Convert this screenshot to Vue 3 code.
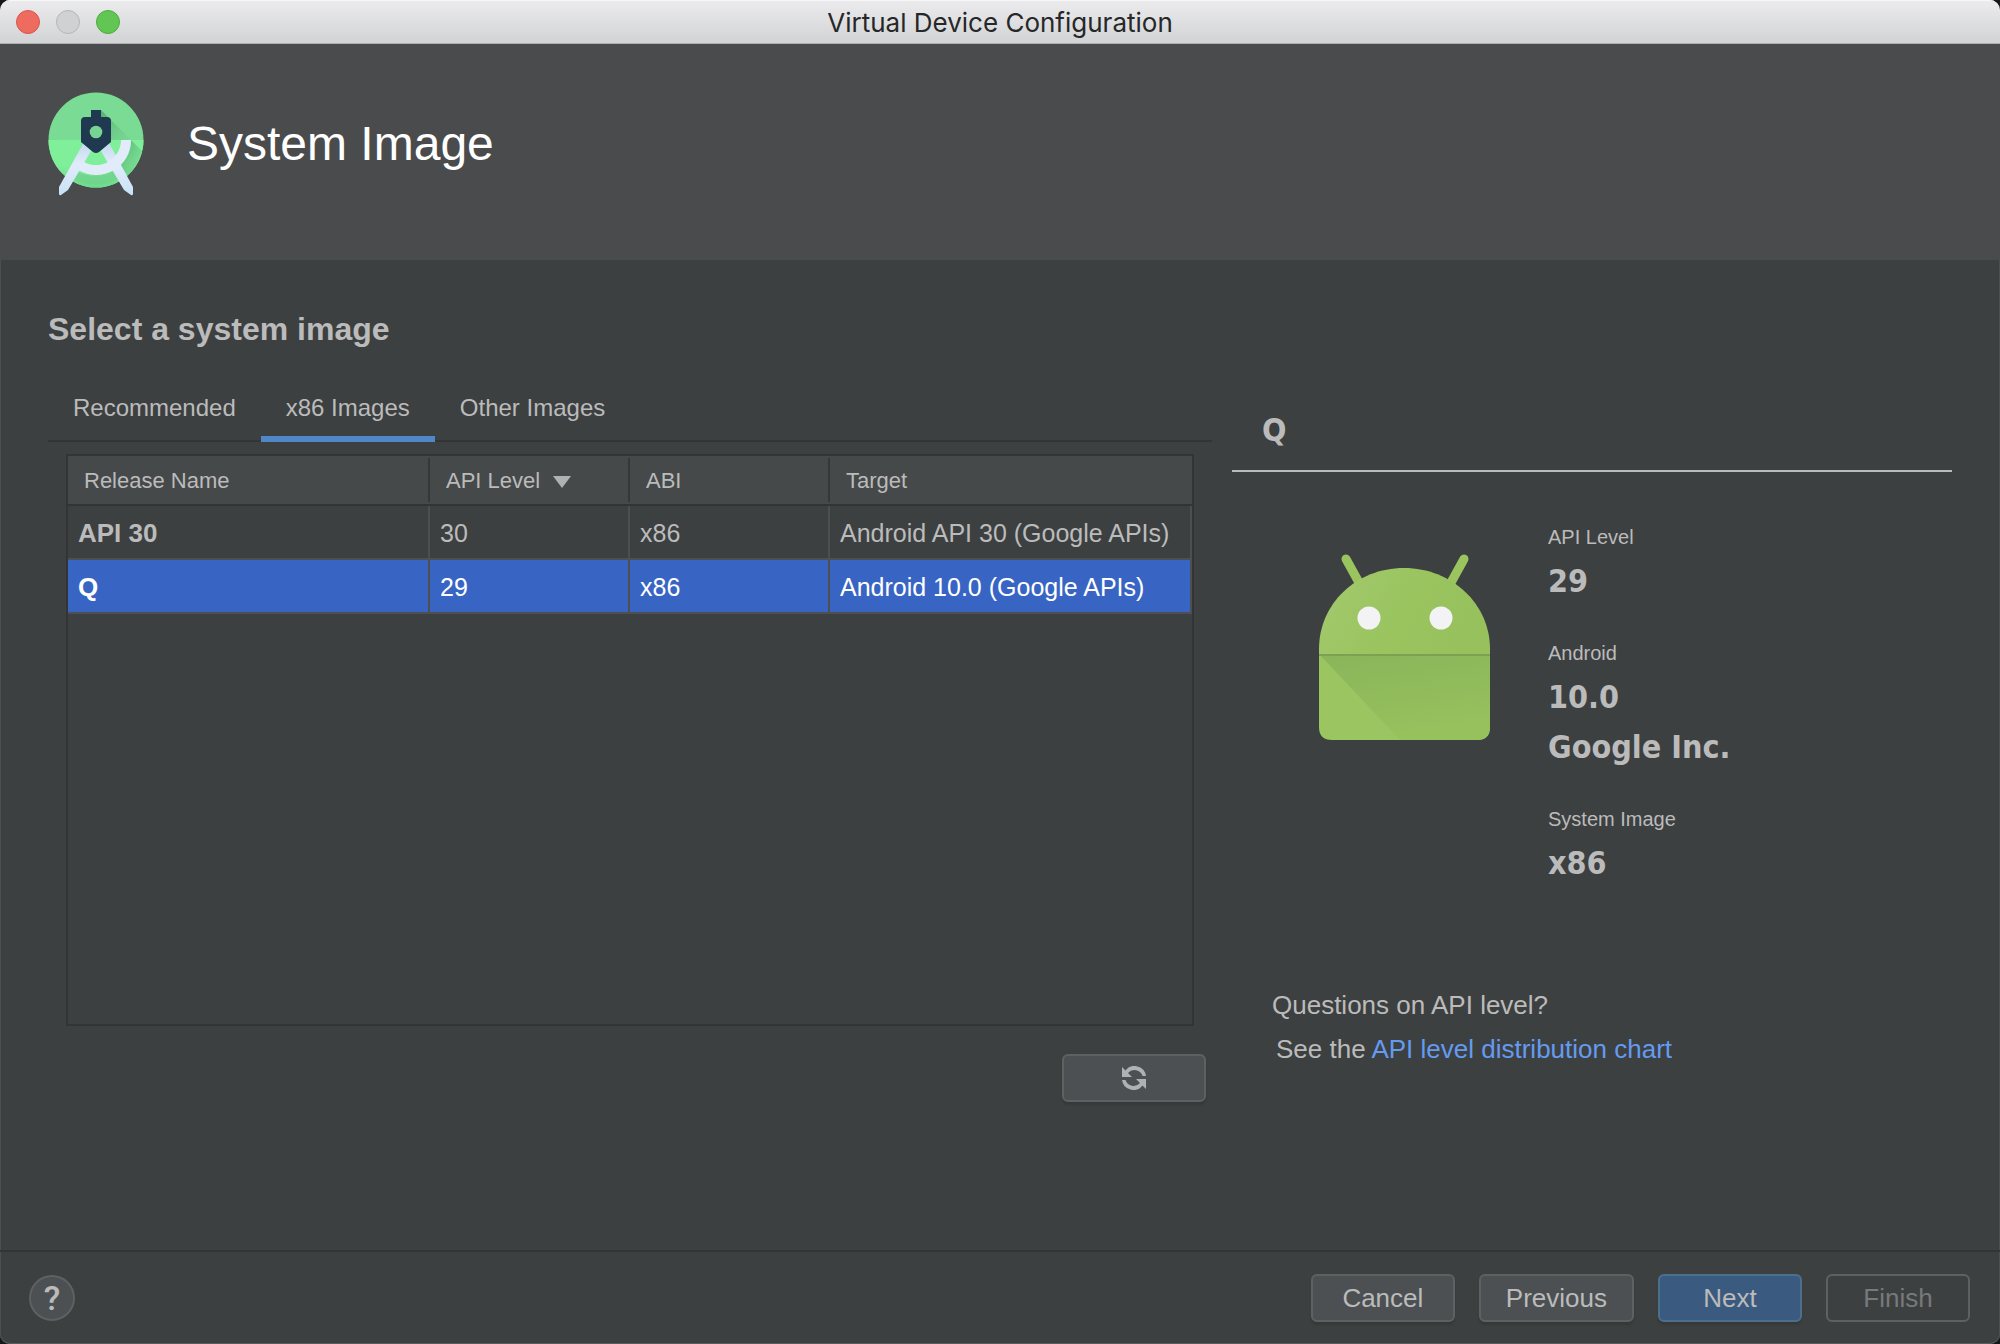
<script setup>
import { ref } from 'vue'

const tabs = ['Recommended', 'x86 Images', 'Other Images']
const activeTab = ref('x86 Images')

const images = [
  { name: 'API 30', api: '30', abi: 'x86', target: 'Android API 30 (Google APIs)' },
  { name: 'Q', api: '29', abi: 'x86', target: 'Android 10.0 (Google APIs)' },
]
const selected = ref('Q')

const details = [
  { label: 'API Level', values: ['29'] },
  { label: 'Android', values: ['10.0', 'Google Inc.'] },
  { label: 'System Image', values: ['x86'] },
]
</script>

<template>
  <div class="desktop">
    <div class="window">
      <header class="titlebar">
        <div class="lights">
          <button class="light close" type="button" aria-label="Close"></button>
          <button class="light minimize" type="button" aria-label="Minimize" disabled></button>
          <button class="light zoom" type="button" aria-label="Zoom"></button>
        </div>
        <span class="window-title">Virtual Device Configuration</span>
      </header>

      <div class="banner">
        <svg class="logo" viewBox="0 0 96 106" aria-hidden="true">
          <defs>
            <linearGradient id="leg" x1="0" y1="0" x2="0" y2="1">
              <stop offset="0" stop-color="#c6d9f0" />
              <stop offset="0.4" stop-color="#e0ecfb" />
              <stop offset="1" stop-color="#c9e2f5" />
            </linearGradient>
            <linearGradient id="disc" x1="0" y1="0" x2="0" y2="1">
              <stop offset="0" stop-color="#80ef9a" />
              <stop offset="0.5" stop-color="#80ef9a" />
              <stop offset="1" stop-color="#6fd98c" />
            </linearGradient>
            <linearGradient id="cast" x1="0" y1="0" x2="1" y2="1">
              <stop offset="0" stop-color="#55a570" stop-opacity="0.9" />
              <stop offset="1" stop-color="#6fce8b" stop-opacity="0.2" />
            </linearGradient>
            <clipPath id="disc-clip"><circle cx="48" cy="48" r="47.5" /></clipPath>
          </defs>
          <g clip-path="url(#disc-clip)">
            <rect width="96" height="96" fill="#79db94" />
            <rect y="48" width="96" height="48" fill="url(#disc)" />
            <path d="M53 18 L83 48 H63 V27 L53 25 Z" fill="url(#cast)" />
            <path d="M83 48 L94 59 Q90 74 80 84 L72 74 Q83 64 83 48Z" fill="url(#cast)" />
            <path d="M29 80 Q48 88 66 79 L70 87 Q48 98 25 87Z" fill="#6fd08b" opacity="0.7" />
          </g>
          <path d="M35.500 51 L43 59 L20 98 L13 103 Q11 104 11 101.500 V95 Z" fill="url(#leg)" />
          <path d="M61 51 L53 59 L76 98 L83 103 Q85 104 85 101.500 V95 Z" fill="url(#leg)" />
          <path d="M78 48 A30 30 0 0 1 33 74" fill="none" stroke="#e2ebfa" stroke-width="10" />
          <path d="M43 18 H53 V25 H59 Q63 25 63 29 V50 L51 60 Q48 62 45 60 L33 50 V29 Q33 25 37 25 H43 Z" fill="#1f3a50" />
          <circle cx="48" cy="40" r="6.300" fill="#78d492" />
        </svg>
        <h1>System Image</h1>
      </div>

      <main class="content">
        <section class="chooser">
          <h2>Select a system image</h2>
          <div class="tabs" role="tablist">
            <button
              v-for="tab in tabs"
              :key="tab"
              class="tab"
              :class="{ active: tab === activeTab }"
              type="button"
              role="tab"
              :aria-selected="tab === activeTab"
              @click="activeTab = tab"
            >{{ tab }}</button>
          </div>

          <div class="table-box">
            <table>
              <colgroup>
                <col class="col-name" />
                <col class="col-short" />
                <col class="col-short" />
                <col />
              </colgroup>
              <thead>
                <tr>
                  <th scope="col">Release Name</th>
                  <th scope="col" aria-sort="descending">API Level<span class="sort-arrow"></span></th>
                  <th scope="col">ABI</th>
                  <th scope="col">Target</th>
                </tr>
              </thead>
              <tbody>
                <tr
                  v-for="image in images"
                  :key="image.name"
                  :class="{ selected: image.name === selected }"
                  @click="selected = image.name"
                >
                  <td class="name">{{ image.name }}</td>
                  <td>{{ image.api }}</td>
                  <td>{{ image.abi }}</td>
                  <td>{{ image.target }}</td>
                </tr>
              </tbody>
            </table>
          </div>

          <button class="btn refresh" type="button" aria-label="Refresh">
            <svg viewBox="0 0 24 24" aria-hidden="true">
              <path d="M0 1 L3.500 4.500 A11.500 11.500 0 0 1 24 10 H20.500 A8.500 8.500 0 0 0 6 7 L10 11 H0 Z" />
              <path d="M24 23 L20.500 19.500 A11.500 11.500 0 0 1 0 14 H3.500 A8.500 8.500 0 0 0 18 17 L14 13 H24 Z" />
            </svg>
          </button>
        </section>

        <aside class="summary">
          <h3>Q</h3>
          <div class="summary-body">
            <svg class="robot" viewBox="0 0 184 190" aria-hidden="true">
              <defs>
                <linearGradient id="head" x1="0" y1="0" x2="1" y2="0.3">
                  <stop offset="0" stop-color="#a4c96f" />
                  <stop offset="0.6" stop-color="#99c45e" />
                  <stop offset="1" stop-color="#97c15d" />
                </linearGradient>
                <linearGradient id="shade" x1="0" y1="0" x2="0.3" y2="1">
                  <stop offset="0" stop-color="#8ab55a" />
                  <stop offset="1" stop-color="#97c15d" />
                </linearGradient>
              </defs>
              <path d="M34 7 L50 36 M152 7 L136 36" stroke="#99c45e" stroke-width="9" stroke-linecap="round" />
              <path d="M7 103 V97 C7 52 44 16 92 16 S178 52 178 97 V103 Z" fill="url(#head)" />
              <path d="M7 102 H178 V175 Q178 188 165 188 H20 Q7 188 7 175 Z" fill="#9ac560" />
              <path d="M8 103 H178 V175 Q178 188 165 188 H88 Z" fill="url(#shade)" />
              <path d="M7 103 H178" stroke="#7da052" stroke-width="2" />
              <circle cx="57" cy="66" r="11.500" fill="#f3f3f5" />
              <circle cx="129" cy="66" r="11.500" fill="#f3f3f5" />
            </svg>
            <dl>
              <div v-for="item in details" :key="item.label" class="detail">
                <dt>{{ item.label }}</dt>
                <dd v-for="value in item.values" :key="value">{{ value }}</dd>
              </div>
            </dl>
          </div>
          <div class="questions">
            <p>Questions on API level?</p>
            <p class="see">See the <a href="#">API level distribution chart</a></p>
          </div>
        </aside>
      </main>

      <footer class="actions">
        <button class="help" type="button" aria-label="Help">?</button>
        <div class="buttons">
          <button class="btn" type="button">Cancel</button>
          <button class="btn" type="button">Previous</button>
          <button class="btn primary" type="button">Next</button>
          <button class="btn" type="button" disabled>Finish</button>
        </div>
      </footer>
    </div>
  </div>
</template>

<style>
body {
  margin: 0;
  background: #161718;
}
</style>

<style scoped>
.desktop {
  font-family: "Liberation Sans", Arial, sans-serif;
  color: #bbbbbb;
}

.window {
  box-sizing: border-box;
  display: flex;
  flex-direction: column;
  min-height: 100vh;
  overflow: hidden;
  border-radius: 10px;
  background: #3d4041;
  box-shadow: inset 0 -1px #5a5c5d, inset 1px 0 #4c4f51, inset -1px 0 #4c4f51;
}

h1, h2, h3, p, dl, dd {
  margin: 0;
}

button {
  margin: 0;
  font-family: inherit;
  color: inherit;
}

.titlebar {
  box-sizing: border-box;
  display: grid;
  grid-template-columns: 1fr auto 1fr;
  align-items: center;
  height: 44px;
  padding: 0 16px;
  border-bottom: 1px solid #b0b1b2;
  background: linear-gradient(#ececee, #d2d3d5);
  box-shadow: inset 0 1px #f7f7f8;
}

.lights {
  display: flex;
  gap: 16px;
}

.light {
  box-sizing: border-box;
  width: 24px;
  height: 24px;
  padding: 0;
  border: 1px solid;
  border-radius: 50%;
}

.close {
  border-color: #d9574c;
  background: #ed6b5f;
}

.minimize {
  border-color: #b5b6b8;
  background: #d0d1d3;
}

.zoom {
  border-color: #4dad3c;
  background: #61c654;
}

.window-title {
  padding-top: 2px;
  font-family: Inter, "Liberation Sans", sans-serif;
  font-size: 26px;
  line-height: 32px;
  color: #262728;
}

.banner {
  box-sizing: border-box;
  display: flex;
  align-items: flex-start;
  gap: 43px;
  min-height: 216px;
  padding: 48px;
  background: #4a4b4c;
}

.logo {
  flex: none;
  width: 96px;
  height: 106px;
}

h1 {
  font-size: 48px;
  font-weight: 400;
  line-height: 104px;
  color: #ffffff;
}

.content {
  flex: 1;
  display: grid;
  grid-template-columns: minmax(0, 1164fr) minmax(0, 720fr);
  gap: 20px;
  padding: 0 48px;
}

.chooser {
  display: flex;
  flex-direction: column;
  padding: 48px 0 148px;
}

h2 {
  font-size: 32px;
  line-height: 42px;
}

.tabs {
  display: flex;
  height: 68px;
  margin-top: 24px;
  box-shadow: inset 0 -2px #323435;
}

.tab {
  padding: 0 25px;
  border: 0;
  background: none;
  font-size: 24px;
}

.tab.active {
  box-shadow: inset 0 -6px #5088c7;
}

.table-box {
  flex: 1;
  margin: 12px 18px 28px;
  border: 2px solid #323435;
}

table {
  width: 100%;
  border-spacing: 0;
  table-layout: fixed;
  text-align: left;
}

.col-name {
  width: 362px;
}

.col-short {
  width: 200px;
}

th {
  box-sizing: border-box;
  height: 50px;
  padding: 1px 16px 0;
  border-bottom: 2px solid #323435;
  background: #45494a;
  font-size: 22px;
  font-weight: 400;
}

th:not(:last-child) {
  background: linear-gradient(#35383a, #35383a) right center / 2px 44px no-repeat #45494a;
}

.sort-arrow {
  display: inline-block;
  margin-left: 13px;
  border: 9px solid transparent;
  border-top: 12px solid #afb1b3;
  border-bottom: 0;
}

td {
  box-sizing: border-box;
  height: 54px;
  padding: 2px 10px 0;
  border-right: 2px solid #4d5051;
  border-bottom: 2px solid #4d5051;
  font-size: 25px;
  white-space: nowrap;
}

.name {
  font-size: 26px;
  font-weight: 700;
}

.selected td {
  background: #3865c4;
  background-clip: padding-box;
  color: #ffffff;
}

.btn {
  box-sizing: border-box;
  min-width: 144px;
  height: 48px;
  padding: 0 25px;
  border: 2px solid #5e6162;
  border-radius: 6px;
  background: #4c5052;
  box-shadow: 0 3px 2px #36393a;
  font-size: 26px;
}

.btn.primary {
  border-color: #4c708c;
  background: #3b5a80;
}

.btn:disabled {
  background: none;
  box-shadow: none;
  color: #77797a;
}

.refresh {
  display: flex;
  align-items: center;
  justify-content: center;
  align-self: flex-end;
  margin-right: 6px;
}

.refresh svg {
  width: 24px;
  height: 24px;
  fill: #afb1b3;
}

.summary h3 {
  padding: 150px 30px 20px;
  border-bottom: 2px solid #bbbbbb;
}

.summary h3,
dd {
  font-family: "DejaVu Sans Condensed", "DejaVu Sans", sans-serif;
  font-size: 32px;
  font-weight: 700;
  line-height: 40px;
}

.summary-body {
  display: flex;
  align-items: flex-start;
  gap: 52px;
  padding: 46px 0 0 80px;
}

.robot {
  flex: none;
  width: 184px;
  height: 190px;
  margin-top: 34px;
}

dl {
  display: flex;
  flex-direction: column;
  gap: 28px;
}

dt {
  font-size: 20px;
  line-height: 38px;
}

dd {
  line-height: 50px;
}

.questions {
  padding: 95px 0 0 40px;
  font-size: 26px;
  line-height: 44px;
}

.see {
  padding-left: 4px;
}

a {
  color: #649bf0;
  text-decoration: none;
}

.actions {
  display: flex;
  align-items: center;
  justify-content: space-between;
  height: 92px;
  padding: 0 30px 0 29px;
  border-top: 2px solid #323435;
}

.help {
  box-sizing: border-box;
  width: 46px;
  height: 46px;
  padding: 0;
  border: 2px solid #5e6162;
  border-radius: 50%;
  background: #4c5052;
  font-family: Roboto, sans-serif;
  font-size: 34px;
  font-weight: 500;
  line-height: 40px;
}

.buttons {
  display: flex;
  gap: 24px;
}
</style>
